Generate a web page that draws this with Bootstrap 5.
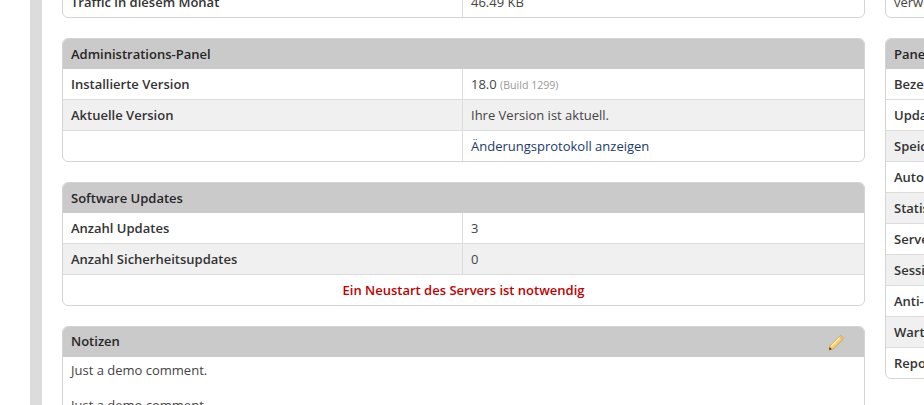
<!DOCTYPE html>
<html lang="de">
<head>
<meta charset="utf-8">
<title>Dashboard</title>
<link rel="stylesheet" href="https://cdn.jsdelivr.net/npm/bootstrap@5.3.0/dist/css/bootstrap.min.css">
<style>
html,body{height:405px;overflow:hidden;background:#fff}
body{font-family:"Open Sans",sans-serif;font-size:13px;line-height:18px;color:#444}
a{color:#1c3a6e;text-decoration:none}
.shell{width:1240px;height:405px;overflow:hidden}
.rail{flex:0 0 30px}
.strip{flex:0 0 12px;background:#dcdcdc}
.maincol{flex:0 0 803px;margin:0 20px}
.sidecol{flex:0 0 320px}
.scrolled{margin-top:-14px}
.pane{border:1px solid #d4d4d4;border-radius:6px;margin-bottom:20px;overflow:hidden;background:#fff}
.pane-head{background:#cacaca;color:#262626;font-weight:600;line-height:30px;padding:1px 9px 0;margin:-1px -1px 0;height:31px;box-sizing:border-box}
.head-title{margin-top:-1px}
.pane table{margin:0;table-layout:fixed;width:100%;--bs-table-bg:transparent;color:inherit;font-size:13px;border-collapse:separate;border-spacing:0}
.pane td{padding:6px 8px;border-width:0 0 1px;border-style:solid;border-color:#dcdcdc;height:31px;line-height:18px;color:#444;box-shadow:none}
.pane tr:last-child td{border-bottom:0;height:30px}
.pane td:first-child{width:400px;font-weight:600;color:#333;border-right:1px solid #dcdcdc}
.pane tr.alt td{background:#f0f0f0}
.pane td.full{text-align:center;color:#c00000;font-weight:600;border-right:0;width:auto}
.hint{font-size:10.6px;line-height:1;color:#999}
.notes{padding:4px 8px;height:80px}
.notes p{margin:0 0 17px}
.side td:first-child{width:auto;border-right:0}
.side td{white-space:nowrap}
.pane td.plain{font-weight:400;color:#444}
.pencil{width:16px;height:16px;display:block;margin:8px 12px 0 0}
</style>
</head>
<body>
<div class="shell d-flex">
  <div class="rail"></div>
  <div class="strip"></div>
  <div class="maincol">
    <div class="pane scrolled">
      <table class="table"><tbody>
        <tr><td>Traffic in diesem Monat</td><td>46.49 KB</td></tr>
      </tbody></table>
    </div>
    <div class="pane">
      <div class="pane-head">Administrations-Panel</div>
      <table class="table"><tbody>
        <tr><td>Installierte Version</td><td>18.0 <span class="hint">(Build 1299)</span></td></tr>
        <tr class="alt"><td>Aktuelle Version</td><td>Ihre Version ist aktuell.</td></tr>
        <tr><td></td><td><a href="#">Änderungsprotokoll anzeigen</a></td></tr>
      </tbody></table>
    </div>
    <div class="pane">
      <div class="pane-head">Software Updates</div>
      <table class="table"><tbody>
        <tr><td>Anzahl Updates</td><td>3</td></tr>
        <tr class="alt"><td>Anzahl Sicherheitsupdates</td><td>0</td></tr>
        <tr><td class="full" colspan="2">Ein Neustart des Servers ist notwendig</td></tr>
      </tbody></table>
    </div>
    <div class="pane">
      <div class="pane-head d-flex justify-content-between">
        <span class="head-title">Notizen</span>
        <svg class="pencil" viewBox="0 0 16 16" aria-hidden="true">
          <defs><linearGradient id="pg" x1="0" y1="0" x2="1" y2="1"><stop offset="0" stop-color="#fdf0a8"/><stop offset="1" stop-color="#eeb53e"/></linearGradient></defs>
          <path d="M1 15l1-4.2L11.6 1.2a1.6 1.6 0 0 1 2.2 0l1 1a1.6 1.6 0 0 1 0 2.2L5.2 14z" fill="url(#pg)" stroke="#c9973a" stroke-width=".7"/>
          <path d="M3.4 10.8L12 2.2" stroke="#fff3b8" stroke-width="1.2"/>
          <path d="M11.6 1.8l2.8 2.8" stroke="#f0b878" stroke-width="1.4"/>
          <path d="M1 15l.7-2.9 2.2 2.2z" fill="#5a3a16"/>
        </svg>
      </div>
      <div class="notes"><p>Just a demo comment.</p><p>Just a demo comment.</p></div>
    </div>
  </div>
  <div class="sidecol">
    <div class="pane scrolled side">
      <table class="table"><tbody>
        <tr><td class="plain">verwendet</td></tr>
      </tbody></table>
    </div>
    <div class="pane side">
      <div class="pane-head">Panel-Details</div>
      <table class="table"><tbody>
        <tr><td>Bezeichnung</td></tr>
        <tr><td>Update-Kanal</td></tr>
        <tr class="alt"><td>Speicherplatz</td></tr>
        <tr><td>Automatisierung</td></tr>
        <tr class="alt"><td>Statistiken</td></tr>
        <tr><td>Server</td></tr>
        <tr class="alt"><td>Sessions</td></tr>
        <tr><td>Anti-Spam</td></tr>
        <tr class="alt"><td>Wartung</td></tr>
        <tr><td>Reports</td></tr>
      </tbody></table>
    </div>
  </div>
</div>
<script src="https://cdn.jsdelivr.net/npm/bootstrap@5.3.0/dist/js/bootstrap.bundle.min.js"></script>
</body>
</html>
